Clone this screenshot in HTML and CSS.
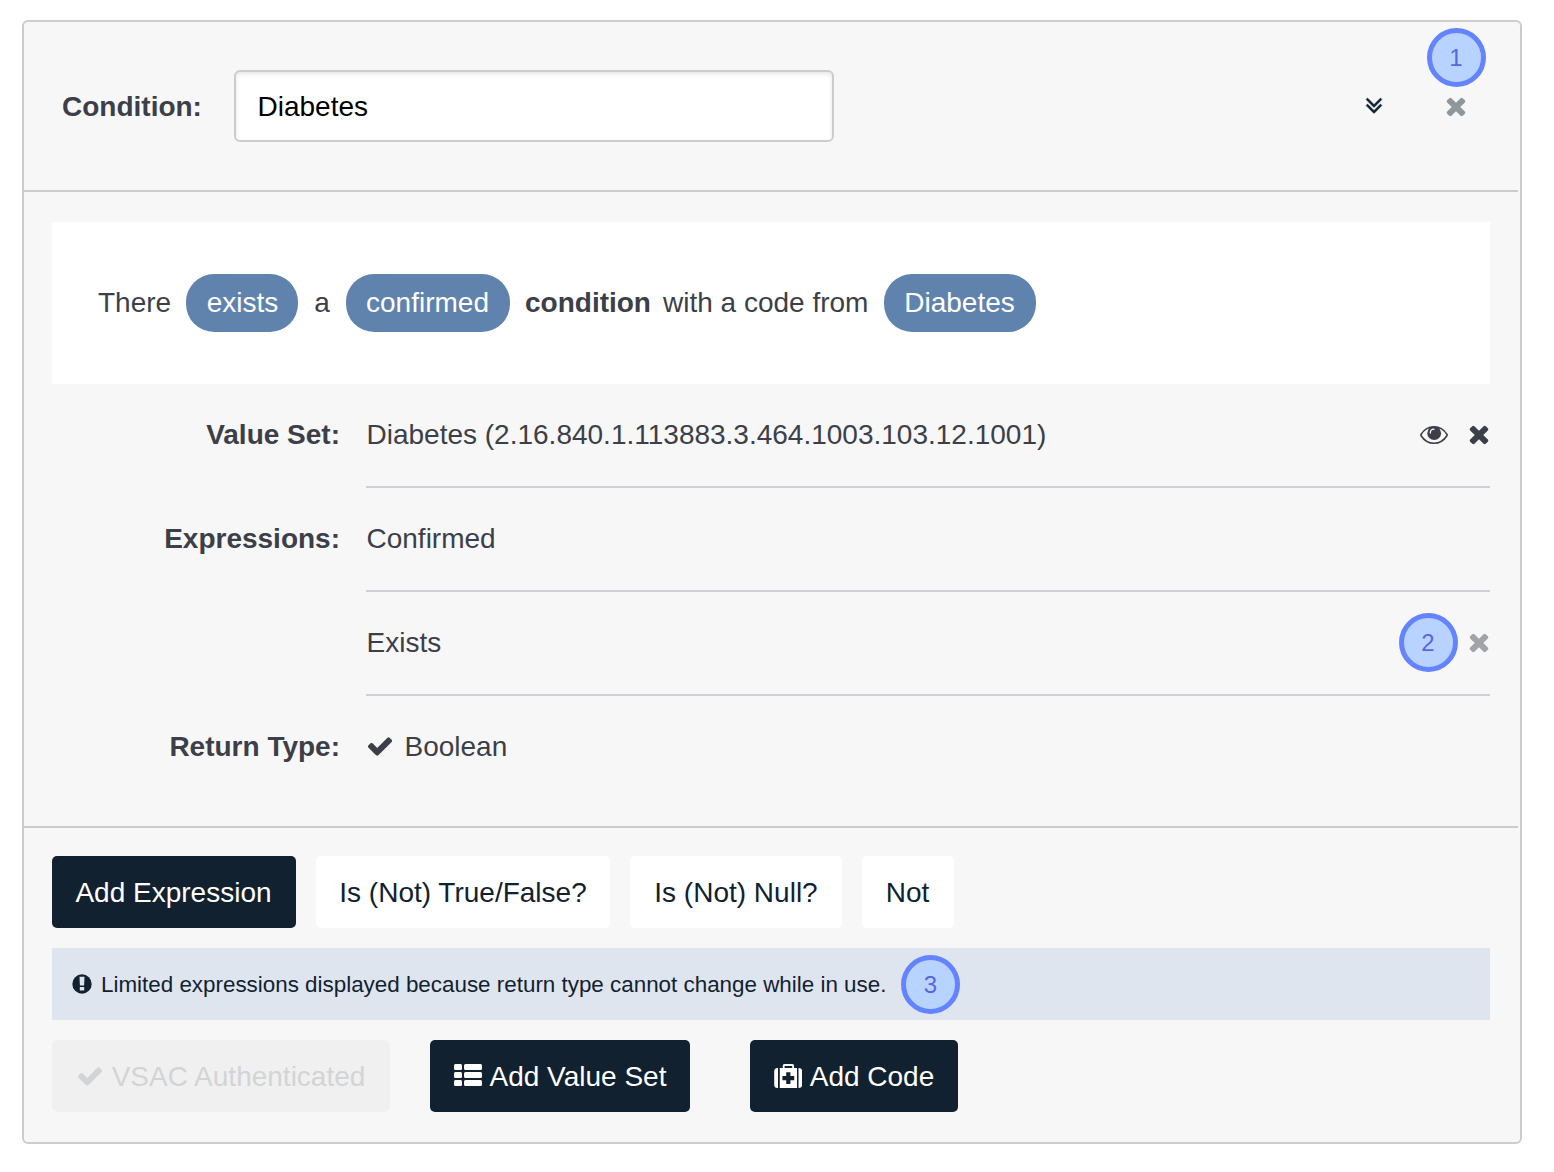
FILE: index.html
```html
<!DOCTYPE html>
<html lang="en">
<head>
<meta charset="utf-8">
<title>Condition: Diabetes</title>
<link rel="stylesheet" href="styles.css">
</head>
<body>
<svg class="sprite" aria-hidden="true">
  <symbol id="times" viewBox="0 0 1792 1792"><path d="M1490 1322q0 40-28 68l-136 136q-28 28-68 28t-68-28l-294-294-294 294q-28 28-68 28t-68-28l-136-136q-28-28-28-68t28-68l294-294-294-294q-28-28-28-68t28-68l136-136q28-28 68-28t68 28l294 294 294-294q28-28 68-28t68 28l136 136q28 28 28 68t-28 68l-294 294 294 294q28 28 28 68z"/></symbol>
  <symbol id="check" viewBox="0 0 1792 1792"><path d="M1671 566q0 40-28 68l-724 724-136 136q-28 28-68 28t-68-28l-136-136-362-362q-28-28-28-68t28-68l136-136q28-28 68-28t68 28l294 295 656-657q28-28 68-28t68 28l136 136q28 28 28 68z"/></symbol>
  <symbol id="eye" viewBox="0 0 28 28"><path d="M1.100 14.300C4.200 9.500 8.800 6.800 14 6.800s9.800 2.700 12.900 7.500q.500.700 0 1.400C23.800 20.500 19.200 23.200 14 23.200S4.200 20.500 1.100 15.700q-.500-.700 0-1.400z" fill="none" stroke="currentColor" stroke-width="1.600"/><circle cx="14.200" cy="13.200" r="6.900"/><path d="M10.300 13q0-3.600 3.700-3.800" fill="none" stroke="#f7f7f7" stroke-width="1.300" stroke-linecap="round"/></symbol>
  <symbol id="double-down" viewBox="0 0 1792 1792"><path d="M1395 864q0 13-10 23l-466 466q-10 10-23 10t-23-10l-466-466q-10-10-10-23t10-23l50-50q10-10 23-10t23 10l393 393 393-393q10-10 23-10t23 10l50 50q10 10 10 23zm0-384q0 13-10 23l-466 466q-10 10-23 10t-23-10l-466-466q-10-10-10-23t10-23l50-50q10-10 23-10t23 10l393 393 393-393q10-10 23-10t23 10l50 50q10 10 10 23z" stroke="currentColor" stroke-width="30"/></symbol>
  <symbol id="exclamation" viewBox="0 0 20 20"><circle cx="10" cy="10" r="9.700"/><path d="M7.500 2.800h5l-.400 8.700H7.900z" fill="#dfe5ef"/><rect x="7.800" y="12.900" width="4.400" height="3.600" rx=".500" fill="#dfe5ef"/></symbol>
  <symbol id="th-list" viewBox="0 0 28 28"><rect y="2" width="8" height="6" rx="1.500"/><rect x="10" y="2" width="18" height="6" rx="1.500"/><rect y="10" width="8" height="6" rx="1.500"/><rect x="10" y="10" width="18" height="6" rx="1.500"/><rect y="18" width="8" height="6" rx="1.500"/><rect x="10" y="18" width="18" height="6" rx="1.500"/></symbol>
  <symbol id="medkit" viewBox="0 0 28 28"><path d="M4 6v20H3.500Q.2 26 .2 22.500v-13Q.2 6 3.500 6zM24.500 6h.300q3.400 0 3.400 3.500v13q0 3.500-3.400 3.500h-.300z"/><path fill-rule="evenodd" d="M5.800 6h3V3.500Q8.800 2 10.300 2h8.200Q20 2 20 3.500V6h3v20H5.800zM10.600 3.900V6h7.600V3.900zM12.200 10.300V14H8.400v4.200h3.800V22h4.200v-3.800h3.800V14h-3.800v-3.700z"/></symbol>
</svg>

<main class="card">
  <header class="card-header">
    <label class="title" for="name">Condition:</label>
    <input class="name" id="name" type="text" value="Diabetes">
    <div class="header-actions">
      <svg class="icon"><use href="#double-down"/></svg>
      <span class="anchor">
        <svg class="icon faded"><use href="#times"/></svg>
        <span class="badge badge-above">1</span>
      </span>
    </div>
  </header>

  <section class="card-body">
    <div class="phrase">
      <span class="w-there">There</span>
      <span class="pill pill-exists">exists</span>
      <span class="w-a">a</span>
      <span class="pill pill-confirmed">confirmed</span>
      <strong class="w-condition">condition</strong>
      <span class="w-with">with a code from</span>
      <span class="pill pill-diabetes">Diabetes</span>
    </div>
    <div class="row">
      <div class="label">Value Set:</div>
      <div class="value">
        <span>Diabetes (2.16.840.1.113883.3.464.1003.103.12.1001)</span>
        <span class="row-actions">
          <svg class="icon"><use href="#eye"/></svg>
          <svg class="icon"><use href="#times"/></svg>
        </span>
      </div>
    </div>
    <div class="row">
      <div class="label">Expressions:</div>
      <div class="value"><span>Confirmed</span></div>
    </div>
    <div class="row">
      <div class="label"></div>
      <div class="value">
        <span>Exists</span>
        <span class="row-actions anchor">
          <svg class="icon faded"><use href="#times"/></svg>
          <span class="badge badge-left">2</span>
        </span>
      </div>
    </div>
    <div class="row">
      <div class="label">Return Type:</div>
      <div class="value last"><svg class="icon"><use href="#check"/></svg><span class="type">Boolean</span></div>
    </div>
  </section>

  <footer class="card-footer">
    <div class="buttons">
      <button class="btn dark b-expression">Add Expression</button>
      <button class="btn light b-true">Is (Not) True/False?</button>
      <button class="btn light b-null">Is (Not) Null?</button>
      <button class="btn light b-not">Not</button>
    </div>
    <div class="notice">
      <svg class="icon small"><use href="#exclamation"/></svg>
      <span class="notice-text">Limited expressions displayed because return type cannot change while in use.</span>
      <span class="badge badge-inline">3</span>
    </div>
    <div class="buttons">
      <button class="btn disabled b-vsac" disabled><svg class="icon"><use href="#check"/></svg>VSAC Authenticated</button>
      <button class="btn dark b-valueset"><svg class="icon"><use href="#th-list"/></svg>Add Value Set</button>
      <button class="btn dark b-code"><svg class="icon"><use href="#medkit"/></svg>Add Code</button>
    </div>
  </footer>
</main>
</body>
</html>
```
FILE: styles.css
```css
* { box-sizing: border-box; }

body {
  margin: 0;
  padding: 20px 32px 0 22px;
  background: #fff;
  color: #3c3f48;
  font: 28px/40px "Liberation Sans", Arial, sans-serif;
}

.sprite { display: none; }

.icon {
  display: block;
  flex: none;
  width: 28px;
  height: 28px;
  overflow: visible;
  fill: currentColor;
}

.card {
  width: 1500px;
  height: 1124px;
  border: 2px solid #ccc;
  border-radius: 6px;
  background: #f7f7f7;
}

/* Header */
.card-header {
  display: flex;
  align-items: center;
  width: 1494px;
  height: 170px;
  padding: 0 48.500px 0 38px;
  border-bottom: 2px solid #ccc;
}

.title {
  width: 172px;
  padding-top: 2px;
  font-weight: bold;
}

.name {
  width: 600px;
  height: 72px;
  padding: 2px 21.500px 0;
  border: 2px solid #ccc;
  border-radius: 6px;
  background: #fff;
  box-shadow: inset 0 2px 4px rgba(0, 0, 0, .1);
  color: #000;
  font: inherit;
}

.header-actions {
  display: flex;
  gap: 53.500px;
  margin-left: auto;
  color: #12212f;
}

.anchor { position: relative; }
.faded { opacity: .45; }

/* Numbered callouts */
.badge {
  display: flex;
  align-items: center;
  justify-content: center;
  width: 59px;
  height: 59px;
  padding-right: 1px;
  border: 5px solid #6483ff;
  border-radius: 50%;
  background: #b8d3ff;
  color: #5a66dc;
  font-size: 24px;
}

.badge-above { position: absolute; left: -14.500px; bottom: 33px; }
.badge-left { position: absolute; right: 35px; top: -15px; }
.badge-inline { margin: 1px 0 0 15px; }

/* Body */
.card-body {
  width: 1494px;
  height: 636px;
  padding: 30px 28px 0;
  border-bottom: 2px solid #ccc;
}

.phrase {
  display: flex;
  align-items: center;
  height: 162px;
  padding-left: 46px;
  background: #fff;
}

.pill {
  height: 58px;
  border-radius: 28px;
  background: #6083ae;
  color: #fff;
  line-height: 58px;
  text-align: center;
}

.w-there { width: 88px; }
.pill-exists { width: 112px; padding-left: 1px; }
.w-a { width: 48px; text-align: center; }
.pill-confirmed { width: 164px; margin-right: 15px; padding-right: 1px; }
.w-condition { width: 138px; }
.w-with { width: 221px; }
.pill-diabetes { width: 152px; padding-right: 1px; }

.row {
  display: grid;
  grid-template-columns: 288px 1fr;
  column-gap: 26px;
  height: 104px;
}

.label {
  padding-top: 31px;
  font-weight: bold;
  text-align: right;
}

.value {
  display: flex;
  align-items: center;
  padding-left: .5px;
  border-bottom: 2px solid #cfd0d4;
}

.value .icon { margin-bottom: 2px; }

.last { padding-left: 0; border-color: transparent; }
.type { margin-left: 10.500px; }

.row-actions {
  display: flex;
  gap: 17px;
  margin: 0 -3px 0 auto;
}

/* Footer */
.card-footer { padding: 28px 30px 0 28px; }

.buttons { display: flex; }

.btn {
  display: flex;
  align-items: center;
  justify-content: center;
  gap: 8px;
  height: 72px;
  padding: 2px 0 0;
  border: 0;
  border-radius: 5px;
  font: inherit;
  line-height: 40px;
  white-space: nowrap;
}

.btn .icon { margin-bottom: 2px; }

.dark { background: #12212f; color: #fff; }
.light { margin-left: 20px; background: #fff; color: #12212f; }
.disabled { background: #f0f0f0; color: #d3d4d6; }

.b-expression { width: 244px; padding-right: 1px; }
.b-true { width: 294px; }
.b-null { width: 212px; }
.b-not { width: 92px; padding-right: 1px; }
.b-vsac { width: 338px; padding-right: 1px; }
.b-valueset { width: 260px; margin-left: 40px; }
.b-code { width: 208px; margin-left: 60px; }

.notice {
  display: flex;
  align-items: center;
  height: 72px;
  margin: 20px 0;
  padding-left: 19.500px;
  background: #dfe5ef;
  color: #12212f;
  font-size: 22.400px;
}

.notice-text { padding-top: 1px; }

.small { width: 20px; height: 20px; margin-right: 9.500px; }
```
